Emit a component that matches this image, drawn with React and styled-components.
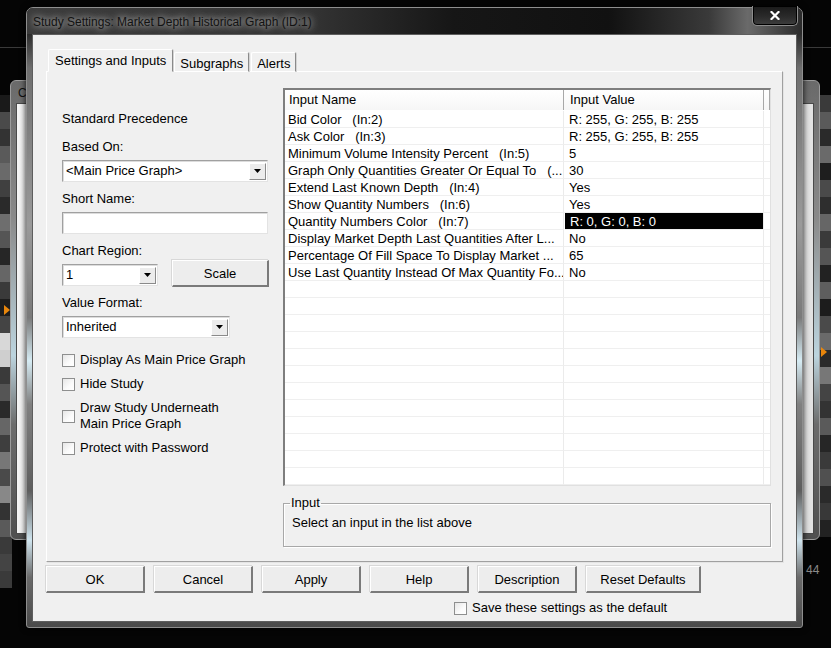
import React from 'react'
import styled, { createGlobalStyle } from 'styled-components'

const GlobalStyle = createGlobalStyle`
  html, body {
    margin: 0;
    padding: 0;
    background: #050505;
    font-family: "Liberation Sans", Arial, sans-serif;
  }
`

const leftBands = [
  '#1a1a1a', '#4a4a4a', '#333333', '#5a5a5a', '#6a6a6a', '#404040', '#2a2a2a', '#6e6e6e',
  '#555555', '#262626', '#666666', '#3a3a3a', '#1e1e1e', '#444444', '#d8d8d8', '#cfcfcf',
  '#3a3a3a', '#555555', '#2a2a2a', '#666666', '#3e3e3e', '#777777', '#4a4a4a', '#888888',
  '#333333', '#5a5a5a', '#3a3a3a', '#444444', '#3a3a3a',
]

const rightBands = [
  '#3a3a3a', '#5a5a5a', '#2a2a2a', '#6a6a6a', '#1e1e1e', '#4a4a4a', '#2e2e2e', '#666666',
  '#3a3a3a', '#555555', '#222222', '#5e5e5e', '#1c1c1c', '#4a4a4a', '#6a6a6a', '#2a2a2a',
  '#777777', '#444444', '#333333', '#5a5a5a', '#262626', '#3a3a3a', '#505050', '#2a2a2a',
  '#383838', '#222222',
]

const rows = [
  ['Bid Color   (In:2)', 'R: 255, G: 255, B: 255'],
  ['Ask Color   (In:3)', 'R: 255, G: 255, B: 255'],
  ['Minimum Volume Intensity Percent   (In:5)', '5'],
  ['Graph Only Quantities Greater Or Equal To   (...', '30'],
  ['Extend Last Known Depth   (In:4)', 'Yes'],
  ['Show Quantity Numbers   (In:6)', 'Yes'],
  ['Quantity Numbers Color   (In:7)', 'R: 0, G: 0, B: 0', true],
  ['Display Market Depth Last Quantities After L...', 'No'],
  ['Percentage Of Fill Space To Display Market ...', '65'],
  ['Use Last Quantity Instead Of Max Quantity Fo...', 'No'],
]

const EMPTY_ROWS = 12

const ArrowIcon = () => (
  <svg width="7" height="4" viewBox="0 0 7 4">
    <polygon points="0,0 7,0 3.5,4" fill="#000" />
  </svg>
)

const CloseIcon = () => (
  <svg width="10" height="9" viewBox="0 0 10 9">
    <path d="M1.5 1 L8.5 8 M8.5 1 L1.5 8" stroke="#fff" strokeWidth="2.2" strokeLinecap="square" />
  </svg>
)

function Combo({ width, value }) {
  return (
    <ComboBox $width={width}>
      <ComboText>{value}</ComboText>
      <ComboButton><ArrowIcon /></ComboButton>
    </ComboBox>
  )
}

function Check({ children }) {
  return (
    <CheckRow>
      <CheckBox />
      <CheckLabel>{children}</CheckLabel>
    </CheckRow>
  )
}

export default function App() {
  return (
    <>
      <GlobalStyle />
      <Desktop>
        <TopLine />
        <ChartStrip $side="left">
          {leftBands.map((c, i) => <Band key={i} $shade={c} />)}
        </ChartStrip>
        <ChartStrip $side="right">
          {rightBands.map((c, i) => <Band key={i} $shade={c} />)}
        </ChartStrip>
        <Marker $side="left" />
        <Marker $side="right" />
        <BackWindow>
          <BackTitle>C</BackTitle>
          <BackClient />
        </BackWindow>
        <AxisText>44</AxisText>

        <Dialog>
          <TitleBar>
            <TitleText>Study Settings: Market Depth Historical Graph (ID:1)</TitleText>
            <CloseButton><CloseIcon /></CloseButton>
          </TitleBar>

          <Client>
            <TabStrip>
              <Tab $active>Settings and Inputs</Tab>
              <Tab>Subgraphs</Tab>
              <Tab>Alerts</Tab>
            </TabStrip>

            <TabPanel>
              <LeftColumn>
                <Heading>Standard Precedence</Heading>

                <Label>Based On:</Label>
                <Combo width={206} value="<Main Price Graph>" />

                <Label $top={9}>Short Name:</Label>
                <TextField />

                <RegionRow>
                  <div>
                    <Label $top={9}>Chart Region:</Label>
                    <Combo width={96} value="1" />
                  </div>
                  <Button $width={97}>Scale</Button>
                </RegionRow>

                <Label $top={9}>Value Format:</Label>
                <Combo width={168} value="Inherited" />

                <CheckList>
                  <Check>Display As Main Price Graph</Check>
                  <Check>Hide Study</Check>
                  <Check>Draw Study Underneath<br />Main Price Graph</Check>
                  <Check>Protect with Password</Check>
                </CheckList>
              </LeftColumn>

              <RightColumn>
                <Table>
                  <HeaderRow>
                    <HeaderCell>Input Name</HeaderCell>
                    <HeaderCell $value>Input Value</HeaderCell>
                    <HeaderCell />
                  </HeaderRow>
                  {rows.map(([name, value, selected]) => (
                    <Row key={name}>
                      <Cell>{name}</Cell>
                      <Cell $value $selected={selected}>{value}</Cell>
                      <Cell $last />
                    </Row>
                  ))}
                  {Array.from({ length: EMPTY_ROWS }).map((_, i) => (
                    <Row key={'e' + i}>
                      <Cell />
                      <Cell $value />
                      <Cell $last />
                    </Row>
                  ))}
                </Table>

                <Group>
                  <Legend>Input</Legend>
                  <GroupText>Select an input in the list above</GroupText>
                </Group>
              </RightColumn>
            </TabPanel>

            <ButtonRow>
              <Button $width={99}>OK</Button>
              <Button $width={99}>Cancel</Button>
              <Button $width={99}>Apply</Button>
              <Button $width={99}>Help</Button>
              <Button $width={99}>Description</Button>
              <Button $width={115}>Reset Defaults</Button>
            </ButtonRow>

            <SaveRow>
              <Check>Save these settings as the default</Check>
            </SaveRow>
          </Client>
        </Dialog>
      </Desktop>
    </>
  )
}

/* ---------- desktop behind the dialog ---------- */

const Desktop = styled.div`
  position: relative;
  width: 831px;
  height: 648px;
  overflow: hidden;
  background: #050505;
`

const TopLine = styled.div`
  position: absolute;
  left: 0;
  right: 0;
  top: 47px;
  height: 1px;
  background: #3a3a3a;
`

const ChartStrip = styled.div`
  position: absolute;
  top: 95px;
  ${p => (p.$side === 'left' ? 'left: 0; width: 12px;' : 'right: 0; width: 12px;')}
  display: flex;
  flex-direction: column;
`

const Band = styled.div`
  height: 17px;
  background: ${p => p.$shade};
`

const Marker = styled.div`
  position: absolute;
  top: ${p => (p.$side === 'left' ? '305px' : '347px')};
  ${p => (p.$side === 'left' ? 'left: 4px;' : 'right: 4px;')}
  width: 0;
  height: 0;
  border-top: 5px solid transparent;
  border-bottom: 5px solid transparent;
  border-left: 6px solid #e8860c;
`

const BackWindow = styled.div`
  position: absolute;
  left: 10px;
  top: 80px;
  width: 810px;
  height: 460px;
  box-sizing: border-box;
  display: flex;
  flex-direction: column;
  padding: 0 5px 5px 5px;
  border: 1px solid #9c9c9c;
  border-radius: 6px;
  background: linear-gradient(180deg, #6a6a6a 0%, #8a8a8a 30%, #bcd4de 60%, #6c6c6c 75%, #505050 100%);
`

const BackTitle = styled.div`
  height: 22px;
  line-height: 24px;
  font-size: 12px;
  color: #111;
  padding-left: 2px;
`

const BackClient = styled.div`
  flex: 1;
  background: linear-gradient(90deg, #f4f4f4 0%, #e2e2e2 100%);
  border: 1px solid #4a4a4a;
`

const AxisText = styled.div`
  position: absolute;
  left: 806px;
  top: 563px;
  font-size: 12px;
  color: #8a8a8a;
`

/* ---------- dialog frame ---------- */

const Dialog = styled.div`
  position: absolute;
  left: 26px;
  top: 7px;
  width: 777px;
  height: 621px;
  box-sizing: border-box;
  display: flex;
  flex-direction: column;
  padding: 0 5px 5px 5px;
  border: 1px solid #8e8e8e;
  border-radius: 7px 7px 3px 3px;
  background: linear-gradient(180deg, #262626 0px, #2c2c2c 26px, #6e6e6e 60px, #9a9a9a 35%,
    #7a7a7a 50%, #d6ecf4 57%, #808080 64%, #5e5e5e 78%, #cfe4ee 86%, #6a6a6a 92%, #4a4a4a 100%);
  box-shadow: 0 0 6px rgba(0, 0, 0, 0.9);
`

const TitleBar = styled.div`
  position: relative;
  height: 26px;
  margin: 0 -5px;
  padding-left: 6px;
  display: flex;
  align-items: center;
  border-radius: 6px 6px 0 0;
  background: linear-gradient(90deg, #3c3c3c 0%, #363636 35%, #161616 55%, #111 75%,
    #3a3a3a 88%, #6a6a6a 93%, #2a2a2a 100%);
`

const TitleText = styled.span`
  font-size: 12px;
  color: #121212;
  padding-top: 1px;
  text-shadow: 0 0 6px rgba(210, 210, 210, 0.9), 0 0 10px rgba(190, 190, 190, 0.7);
`

const CloseButton = styled.div`
  position: absolute;
  right: 4px;
  top: -2px;
  width: 46px;
  height: 20px;
  box-sizing: border-box;
  display: flex;
  align-items: center;
  justify-content: center;
  border: 1px solid #8c8c8c;
  border-top: none;
  border-radius: 0 0 5px 5px;
  background: linear-gradient(180deg, #1a1a1a 0%, #2a2a2a 55%, #3e3e3e 100%);
  box-shadow: inset 0 0 0 1px #000;
`

const Client = styled.div`
  flex: 1;
  display: flex;
  flex-direction: column;
  padding: 14px 13px 0 13px;
  background: #f0f0f0;
  border: 1px solid #5e5e5e;
`

/* ---------- tabs ---------- */

const TabStrip = styled.div`
  height: 23px;
  display: flex;
  align-items: flex-end;
  padding-left: 2px;
  margin-bottom: -1px;
  position: relative;
  z-index: 1;
`

const Tab = styled.div`
  height: ${p => (p.$active ? '23px' : '20px')};
  box-sizing: border-box;
  padding: ${p => (p.$active ? '2px 6px 0 6px' : '2px 5px 0 5px')};
  margin-right: ${p => (p.$active ? '1px' : '2px')};
  font-size: 13px;
  line-height: 17px;
  color: #000;
  background: #f0f0f0;
  border-top: 1px solid #ffffff;
  border-left: 1px solid #ffffff;
  border-right: 1px solid #8a8a8a;
  border-bottom: ${p => (p.$active ? '1px solid #f0f0f0' : '1px solid #ffffff')};
  border-radius: 2px 2px 0 0;
  box-shadow: 1px 0 0 #d4d4d4;
`

const TabPanel = styled.div`
  height: 491px;
  box-sizing: border-box;
  display: grid;
  grid-template-columns: 221px 488px;
  padding: 16px 11px 0 15px;
  border-top: 1px solid #ffffff;
  border-left: 1px solid #ffffff;
  border-right: 1px solid #a0a0a0;
  border-bottom: 1px solid #a0a0a0;
  box-shadow: 1px 1px 0 #e4e4e4;
`

/* ---------- left column ---------- */

const LeftColumn = styled.div`
  display: flex;
  flex-direction: column;
  align-items: flex-start;
  font-size: 13px;
  color: #000;
`

const Heading = styled.div`
  margin-top: 23px;
  line-height: 16px;
`

const Label = styled.div`
  margin-top: ${p => (p.$top ?? 12)}px;
  margin-bottom: 5px;
  line-height: 16px;
`

const fieldBorder = `
  box-sizing: border-box;
  background: #fff;
  border-top: 1px solid #a0a0a0;
  border-left: 1px solid #a0a0a0;
  border-right: 1px solid #e3e3e3;
  border-bottom: 1px solid #e3e3e3;
  box-shadow: inset 1px 1px 0 #dcdcdc;
`

const ComboBox = styled.div`
  ${fieldBorder}
  width: ${p => p.$width}px;
  height: 22px;
  display: flex;
  align-items: center;
  padding: 1px 1px 1px 3px;
`

const ComboText = styled.span`
  flex: 1;
  font-size: 13px;
  line-height: 16px;
  white-space: nowrap;
`

const ComboButton = styled.div`
  width: 17px;
  height: 17px;
  box-sizing: border-box;
  display: flex;
  align-items: center;
  justify-content: center;
  background: #ececec;
  border-top: 1px solid #fff;
  border-left: 1px solid #fff;
  border-right: 1px solid #8a8a8a;
  border-bottom: 1px solid #8a8a8a;
`

const TextField = styled.div`
  ${fieldBorder}
  width: 206px;
  height: 22px;
`

const RegionRow = styled.div`
  display: flex;
  align-items: flex-end;
  gap: 14px;

  & > button {
    margin-bottom: -1px;
  }
`

const CheckList = styled.div`
  margin-top: 14px;
  display: flex;
  flex-direction: column;
  gap: 8px;
`

const CheckRow = styled.div`
  display: flex;
  align-items: center;
  gap: 5px;
`

const CheckBox = styled.div`
  width: 13px;
  height: 13px;
  box-sizing: border-box;
  flex-shrink: 0;
  border: 1px solid #8e8f8f;
  background: linear-gradient(135deg, #e6e6e6 0%, #fbfbfb 60%, #ffffff 100%);
`

const CheckLabel = styled.span`
  font-size: 13px;
  line-height: 16px;
  color: #000;
`

/* ---------- right column ---------- */

const RightColumn = styled.div`
  display: flex;
  flex-direction: column;
`

const Table = styled.div`
  height: 398px;
  box-sizing: border-box;
  background: #fff;
  border-top: 2px solid #7e7e7e;
  border-left: 2px solid #7e7e7e;
  border-right: 1px solid #e0e0e0;
  border-bottom: 1px solid #e0e0e0;
  overflow: hidden;
  font-size: 13px;
`

const HeaderRow = styled.div`
  display: grid;
  grid-template-columns: 279px 200px 1fr;
  height: 20px;
  margin-bottom: 1px;
  box-sizing: border-box;
  border-bottom: 1px solid #a0a0a0;
`

const HeaderCell = styled.div`
  box-sizing: border-box;
  padding-left: ${p => (p.$value ? '6px' : '4px')};
  line-height: 20px;
  background: linear-gradient(180deg, #ffffff 0%, #f6f6f6 100%);
  border-right: 1px solid #a8a8a8;
  white-space: nowrap;
`

const Row = styled.div`
  display: grid;
  grid-template-columns: 279px 200px 1fr;
  height: 17px;
`

const Cell = styled.div`
  box-sizing: border-box;
  padding-left: ${p => (p.$value ? '5px' : '3px')};
  margin-left: ${p => (p.$selected ? '1px' : '0')};
  line-height: 17px;
  white-space: pre;
  overflow: hidden;
  color: ${p => (p.$selected ? '#fff' : '#000')};
  background: ${p => (p.$selected ? '#000' : 'transparent')};
  border-bottom: 1px solid #efefef;
  border-right: ${p => (p.$last ? 'none' : '1px solid #ebebeb')};
`

const Group = styled.fieldset`
  margin: 9px 0 0 0;
  padding: 0 0 0 8px;
  height: 52px;
  box-sizing: border-box;
  border: 1px solid #a8a8a8;
  box-shadow: inset 1px 1px 0 #fff, 1px 1px 0 #fff;
`

const Legend = styled.legend`
  margin-left: -2px;
  padding: 0 1px;
  font-size: 13px;
  line-height: 16px;
  color: #000;
`

const GroupText = styled.div`
  margin-top: 4px;
  font-size: 13px;
  line-height: 16px;
  color: #000;
`

/* ---------- bottom ---------- */

const ButtonRow = styled.div`
  display: flex;
  gap: 9px;
  margin-top: 4px;
`

const Button = styled.button`
  width: ${p => p.$width}px;
  height: 27px;
  box-sizing: border-box;
  padding: 0;
  font-family: "Liberation Sans", Arial, sans-serif;
  font-size: 13px;
  color: #000;
  background: #ededed;
  border-top: 1px solid #ffffff;
  border-left: 1px solid #ffffff;
  border-right: 2px solid #7a7a7a;
  border-bottom: 2px solid #7a7a7a;
  box-shadow: -1px -1px 0 #d8d8d8;
`

const SaveRow = styled.div`
  margin-top: 7px;
  padding-left: 408px;
`
